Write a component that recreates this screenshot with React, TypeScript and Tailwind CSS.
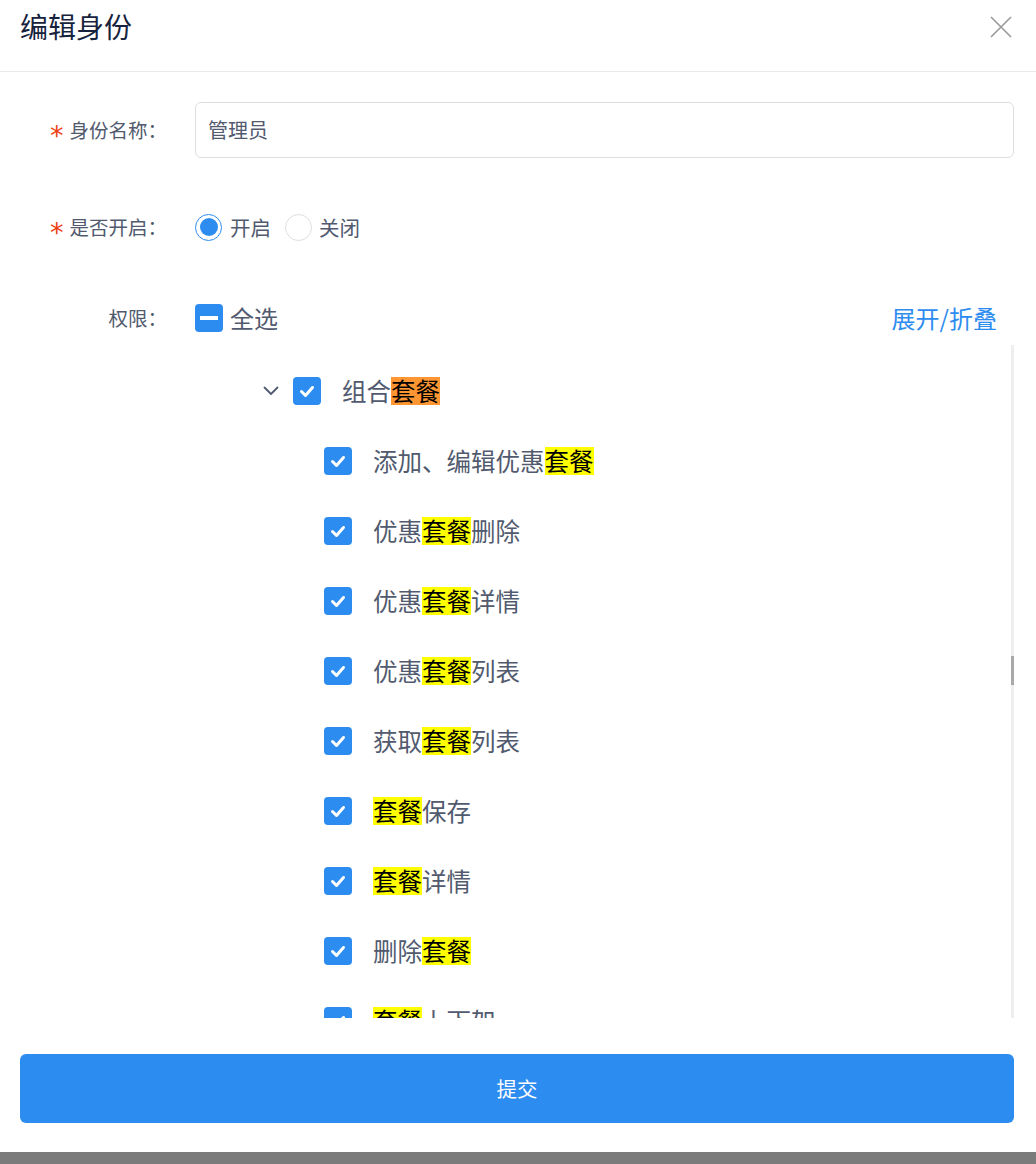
import React from "react";

const FONT = { fontFamily: '"Noto Sans CJK SC", "Noto Sans", sans-serif' };

function Check({ className = "" }: { className?: string }) {
  return (
    <span className={"flex h-[28px] w-[28px] shrink-0 items-center justify-center rounded-[4px] bg-[#2d8cf0] " + className}>
      <svg width="28" height="28" viewBox="0 0 28 28" fill="none">
        <path d="M8.5 14.5 L12.5 18.5 L19.5 10.5" stroke="#fff" strokeWidth="3" strokeLinecap="round" strokeLinejoin="round" />
      </svg>
    </span>
  );
}

function HL({ children, orange }: { children: React.ReactNode; orange?: boolean }) {
  return (
    <span className={"inline-block h-[28px] leading-[28px] text-black " + (orange ? "bg-[#ff9632]" : "bg-[#ffff00]")}>
      {children}
    </span>
  );
}

function Item({ children }: { children: React.ReactNode }) {
  return (
    <div className="flex h-[70px] items-center pl-[304px]">
      <Check />
      <span className="ml-[21px] whitespace-nowrap text-[24.5px] leading-[28px] text-[#515a6e]">{children}</span>
    </div>
  );
}

function Star() {
  return (
    <span
      className="mr-[6px] translate-y-[5px] text-[27px] leading-none text-[#ed4014]"
      style={{ fontFamily: '"DejaVu Sans", sans-serif' }}
    >
      *
    </span>
  );
}

export default function App() {
  return (
    <div className="flex h-[1164px] w-[1036px] flex-col bg-[#7b7b7b]" style={FONT}>
      <div className="flex h-[1152px] flex-col bg-white">
        {/* header */}
        <div className="flex h-[72px] shrink-0 items-start justify-between border-b border-[#e8eaec] pl-[20px] pr-[24px]">
          <div className="pt-[11px] text-[28px] leading-[30px] text-[#17233d]">编辑身份</div>
          <svg className="mt-[16px]" width="22" height="22" viewBox="0 0 22 22" fill="none">
            <path d="M1 1 L21 21 M21 1 L1 21" stroke="#999" strokeWidth="1.6" />
          </svg>
        </div>

        {/* form */}
        <div className="flex flex-1 flex-col pl-[20px] pr-[22px]">
          <div className="mt-[30px] flex h-[56px] items-center">
            <div className="flex w-[175px] items-center justify-end pr-[28px] text-[19.5px] text-[#515a6e]">
              <Star />
              <span>身份名称：</span>
            </div>
            <div className="flex h-[56px] flex-1 items-center rounded-[6px] border border-[#dcdee2] px-[12px] text-[20px] text-[#515a6e]">
              管理员
            </div>
          </div>

          <div className="mt-[41px] flex h-[56px] items-center">
            <div className="flex w-[175px] items-center justify-end pr-[28px] text-[19.5px] text-[#515a6e]">
              <Star />
              <span>是否开启：</span>
            </div>
            <div className="flex items-center text-[20.5px] text-[#515a6e]">
              <span className="flex h-[27px] w-[27px] items-center justify-center rounded-full border border-[#2d8cf0]">
                <span className="h-[18px] w-[18px] rounded-full bg-[#2d8cf0]" />
              </span>
              <span className="ml-[8px]">开启</span>
              <span className="ml-[14px] h-[27px] w-[27px] rounded-full border border-[#dcdee2]" />
              <span className="ml-[7px]">关闭</span>
            </div>
          </div>

          <div className="mt-[49px] flex h-[28px] items-center">
            <div className="w-[175px] pr-[28px] text-right text-[19.5px] text-[#515a6e]">权限：</div>
            <span className="flex h-[28px] w-[28px] items-center justify-center rounded-[4px] bg-[#2d8cf0]">
              <span className="h-[4px] w-[18px] bg-white" />
            </span>
            <span className="ml-[7px] text-[24px] text-[#515a6e]">全选</span>
            <span className="ml-auto mr-[17px] text-[24px] text-[#2d8cf0]">展开/折叠</span>
          </div>

          {/* tree */}
          <div className="relative mt-[13px] h-[673px] overflow-hidden">
            <div className="pt-[11px]">
              <div className="flex h-[70px] items-center pl-[243px]">
                <svg width="16" height="16" viewBox="0 0 16 16" fill="none">
                  <path d="M1.5 4.5 L8 11 L14.5 4.5" stroke="#515a6e" strokeWidth="1.8" strokeLinecap="round" strokeLinejoin="round" />
                </svg>
                <Check className="ml-[14px]" />
                <span className="ml-[21px] whitespace-nowrap text-[24.5px] leading-[28px] text-[#515a6e]">
                  组合<HL orange>套餐</HL>
                </span>
              </div>
              <Item>添加、编辑优惠<HL>套餐</HL></Item>
              <Item>优惠<HL>套餐</HL>删除</Item>
              <Item>优惠<HL>套餐</HL>详情</Item>
              <Item>优惠<HL>套餐</HL>列表</Item>
              <Item>获取<HL>套餐</HL>列表</Item>
              <Item><HL>套餐</HL>保存</Item>
              <Item><HL>套餐</HL>详情</Item>
              <Item>删除<HL>套餐</HL></Item>
              <Item><HL>套餐</HL>上下架</Item>
              <Item>修改<HL>套餐</HL>状态</Item>
            </div>
            <div className="absolute right-0 top-0 h-full w-[3px] bg-[#eeeeee]">
              <div className="mt-[311px] h-[29px] w-[3px] bg-[#a9a9a9]" />
            </div>
          </div>

          <button className="mt-[36px] flex h-[69px] w-full items-center justify-center rounded-[6px] bg-[#2d8cf0] text-[20.5px] text-white">
            提交
          </button>
        </div>
      </div>
    </div>
  );
}
